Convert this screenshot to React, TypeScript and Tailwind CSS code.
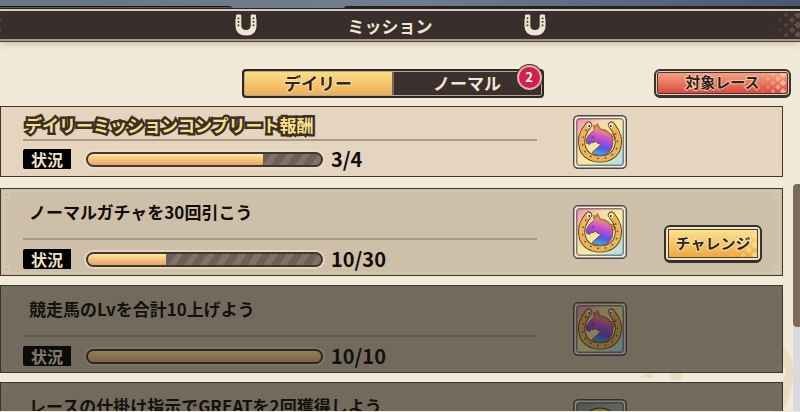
import { useState } from "react";

type Mission = {
  id: number;
  title: string;
  current: number;
  total: number;
  featured?: boolean;
  challenge?: boolean;
  cleared?: boolean;
  silver?: boolean;
};

const missions: Mission[] = [
  {
    id: 1,
    title: "デイリーミッションコンプリート報酬",
    current: 3,
    total: 4,
    featured: true,
  },
  {
    id: 2,
    title: "ノーマルガチャを30回引こう",
    current: 10,
    total: 30,
    challenge: true,
  },
  {
    id: 3,
    title: "競走馬のLvを合計10上げよう",
    current: 10,
    total: 10,
    cleared: true,
  },
  {
    id: 4,
    title: "レースの仕掛け指示でGREATを2回獲得しよう",
    current: 2,
    total: 2,
    cleared: true,
    silver: true,
  },
];

const Horseshoe = () => (
  <svg viewBox="0 0 22 22" className="w-[22px] h-[22px]" aria-hidden="true">
    <path
      d="M1 1.5Q1 .5 2 .5H5Q6.300 .5 6.300 1.500V12Q6.800 16 11 16T15.700 12V1.500Q15.700 .5 17 .5H20Q21 .5 21 1.500V4.500H21.500V12.500Q21 21.500 11 21.500T.5 12.500V4.500H1Z"
      fill="#efe5d0"
    />
    {[3.5, 7, 10.5].map((y) => (
      <g key={y} fill="#3b302c">
        <rect x="2.600" y={y} width="1.700" height="1.700" />
        <rect x="17.700" y={y} width="1.700" height="1.700" />
      </g>
    ))}
  </svg>
);

const Checker = ({ color, className }: { color: string; className: string }) => (
  <svg viewBox="0 0 28 24" className={className} aria-hidden="true">
    <g fill={color}>
      {[0, 1, 2, 3, 4].map((col) =>
        [0, 1, 2].map((row) => {
          const x = 2 + col * 6;
          const y = 2 + row * 10 + (col % 2) * 5;
          const r = 1.6 + col * 0.6;
          return (
            <path
              key={`${col}-${row}`}
              opacity={0.2 + col * 0.12}
              d={`M${x} ${y - r}L${x + r} ${y}L${x} ${y + r}L${x - r} ${y}Z`}
            />
          );
        })
      )}
    </g>
  </svg>
);

const RewardIcon = ({ id, silver }: { id: number; silver?: boolean }) => (
  <svg
    viewBox="0 0 54 54"
    className="w-[54px] h-[54px] shrink-0"
    role="img"
    aria-label="報酬"
  >
    <defs>
      <linearGradient id={`bg${id}`} x1="0" y1="0" x2="1" y2="1">
        <stop offset="0" stopColor={silver ? "#8f8f8f" : "#ee8cb4"} />
        <stop offset=".3" stopColor={silver ? "#a5a5a5" : "#f6d7a8"} />
        <stop offset=".6" stopColor={silver ? "#b5b5b5" : "#f3f0a4"} />
        <stop offset="1" stopColor={silver ? "#c5c5c5" : "#a9dcee"} />
      </linearGradient>
      <linearGradient id={`horse${id}`} x1=".65" y1="0" x2=".4" y2="1">
        <stop offset="0" stopColor="#f0ae5c" />
        <stop offset=".22" stopColor="#ea8a86" />
        <stop offset=".46" stopColor="#c44cd2" />
        <stop offset=".72" stopColor="#5a52e6" />
        <stop offset="1" stopColor="#2cc4ee" />
      </linearGradient>
    </defs>
    <rect x=".7" y=".7" width="52.600" height="52.600" rx="4.500" fill="#f1ece4" stroke="#4b4745" strokeWidth="1.400" />
    <rect x="3.800" y="3.800" width="46.400" height="46.400" rx="2" fill={`url(#bg${id})`} stroke="#514c50" strokeWidth="1" />
    {silver ? (
      <g fill="none" strokeLinecap="round">
        <path d="M15 36C2 4 52 4 39 36" stroke="#3b352c" strokeWidth="7" />
        <path d="M15 36C2 4 52 4 39 36" stroke="#e8d25c" strokeWidth="5" />
      </g>
    ) : (
      <g strokeLinejoin="round">
        <g fill="none" strokeLinecap="round">
          <path d="M15.500 10C3 25 8 44 27 44S51 25 38.500 10" stroke="#5d3c1c" strokeWidth="7.200" />
          <path d="M15.500 10C3 25 8 44 27 44S51 25 38.500 10" stroke="#e9b55c" strokeWidth="5.400" />
          <path
            d="M13 15C6 27 9 43 27 43.500S48 27 41 15"
            stroke="#7b4520"
            strokeWidth="1.500"
            strokeDasharray=".5 7"
          />
        </g>
        <circle cx="16" cy="10.500" r="2.300" fill="#fbf2da" />
        <circle cx="38" cy="10.500" r="2.300" fill="#fbf2da" />
        <circle cx="16.300" cy="11" r="1" fill="#2d2119" />
        <circle cx="37.700" cy="11" r="1" fill="#2d2119" />
        <path
          d="M21.500 15L20.500 10.500L23 11.500L24.500 8.500L27 14Q35 14.500 38.500 20.500Q41 27 39 32.500Q35.500 40 28.500 40.500Q22 40.500 19 37.500L28 29.500Q24.500 28.500 22.500 26.500Q20 28 18.500 27.500L16.500 29.500L13.500 28L13 25Q15 20 21.500 15Z"
          fill={`url(#horse${id})`}
          stroke="#8a5128"
          strokeWidth="1"
        />
        <path
          d="M21.500 15L21 10.500L23 12L24.500 9L27 14.500Q34 15.500 37.500 20.500"
          fill="none"
          stroke="#b78138"
          strokeWidth="1.500"
        />
        <path d="M38 20L41.500 19L39.500 22L43 23L40 25" fill="none" stroke="#8a5128" strokeWidth="1" />
        <path d="M18.500 22.500L21 21.800" stroke="#5a2a60" strokeWidth="1" />
      </g>
    )}
  </svg>
);

// small ornament in each corner of a card
const Corners = () => (
  <div
    aria-hidden="true"
    className="absolute inset-0.5 flex flex-col justify-between border border-[#dfd0b5]/50"
  >
    {["top", "bottom"].map((side) => (
      <div key={side} className="flex justify-between">
        <span className="size-1.5 border border-[#e6dac2]/40" />
        <span className="size-1.5 border border-[#e6dac2]/40" />
      </div>
    ))}
  </div>
);

const MissionCard = ({ mission }: { mission: Mission }) => {
  const { id, title, current, total, featured, challenge, cleared, silver } =
    mission;

  return (
    <li
      className={`relative flex shrink-0 items-center border border-[#40352e] pl-[22px] ${
        featured ? "mb-0.5 h-[71px] bg-[#e5d5bf]" : "h-[88px] bg-[#cebfa9]"
      }`}
    >
      <Corners />
      <div className="relative min-w-0 flex-1 self-stretch">
        <div
          className={`border-b-2 border-[#aa9b86] ${
            featured ? "h-[34px] pt-1.5" : "h-[51px] pt-[11px]"
          }`}
        >
          {featured ? (
            <h2 className="whitespace-nowrap pl-0.5 text-[17px] leading-6 font-bold text-[#f8df8d] [-webkit-text-stroke:5px_#3d3023] [paint-order:stroke_fill] [stroke-linejoin:round]">
              {title}
            </h2>
          ) : (
            <h2 className="whitespace-nowrap pl-1.5 text-[17px] leading-6 font-bold text-[#100d0a]">
              {title}
            </h2>
          )}
        </div>
        <div
          className={`flex items-center ${featured ? "pt-2" : "pt-[9px]"}`}
        >
          <span className="h-5 w-12 rounded-l-xs bg-black text-center text-[16px] leading-5 font-bold text-[#eee0c4]">
            状況
          </span>
          <div
            role="progressbar"
            aria-label={title}
            aria-valuenow={current}
            aria-valuemax={total}
            className="ml-[15px] h-[15px] w-[237px] overflow-hidden rounded-full border-2 border-[#41372f] bg-[repeating-linear-gradient(125deg,#6d6055_0px,#6d6055_7px,#807366_7px,#807366_13px)] ring-2 ring-[#eadfc9]/70"
          >
            <div
              className={`h-full bg-linear-to-b ${
                cleared
                  ? "from-[#fff0a0] to-[#f0a878]"
                  : "from-[#ffe79c] to-[#e9a068]"
              }`}
              style={{ width: `${(current / total) * 100}%` }}
            />
          </div>
          <span className="ml-2 text-[20px] leading-5 font-bold text-[#100d0a]">
            {current}/{total}
          </span>
        </div>
      </div>
      <div className="relative ml-9 flex w-[209px] items-center">
        <RewardIcon id={id} silver={silver} />
        {challenge && (
          <button
            type="button"
            className="mt-5 ml-[37px] -mb-1 h-[38px] w-[98px] rounded-md border-2 border-b-3 border-[#35302a] bg-[#eee4c8] p-0.5"
          >
            <span className="relative flex h-full items-center justify-center border border-[#4a3e2c] bg-linear-to-b from-[#fae28d] to-[#eea93d] text-[15px] font-bold text-[#2f241e]">
              <Checker
                color="#fbe3a0"
                className="absolute right-0 bottom-0 h-6 w-7"
              />
              <span className="relative [-webkit-text-stroke:2px_#f9e2a6] [paint-order:stroke_fill]">
                チャレンジ
              </span>
            </span>
          </button>
        )}
      </div>
      {cleared && <div className="absolute inset-0 bg-[#161512]/50" />}
    </li>
  );
};

const App = () => {
  const [tab, setTab] = useState("daily");

  return (
    <main className="relative flex h-screen flex-col overflow-hidden bg-[#f1ead8] font-['Noto_Sans_CJK_JP',sans-serif]">
      <svg
        viewBox="0 0 160 70"
        className="absolute right-0 bottom-0 h-[70px] w-40"
        aria-hidden="true"
      >
        <path
          d="M0 36L10 28L14 36ZM28 30H44L40 38H32ZM136 0Q154 8 153 34Q152 56 142 70H132L146 30Z"
          fill="#e9dcc2"
        />
      </svg>
      <div className="flex h-[9px] shrink-0 items-end justify-between bg-linear-to-r from-[#6b7581] via-[#707e91] to-[#4c566d]">
        <span className="h-[3px] w-[29%] rounded-tr border-t border-[#171513] bg-[#5b5850]" />
        <span className="h-[3px] w-[57%] rounded-tl bg-[#25221f]" />
      </div>
      <header className="flex h-8 shrink-0 items-center border-y-2 border-t-[#d9cbb6] border-b-[#a89688] bg-[#382e2b] shadow-[0_-1px_0_#292321,0_1px_0_#51443d,0_4px_5px_#b9aa9588]">
        <Checker color="#77604f" className="h-6 w-7 -scale-x-100 -ml-5" />
        <div className="flex flex-1 items-center justify-center gap-[91px]">
          <Horseshoe />
          <h1 className="pt-0.5 text-[17px] leading-6 font-bold text-[#f1e5cf]">
            ミッション
          </h1>
          <Horseshoe />
        </div>
        <Checker color="#77604f" className="h-6 w-7" />
      </header>

      <nav className="flex h-[65px] shrink-0 items-center pt-[19px] pr-[9px]">
        <div className="flex-1" />
        <div className="relative flex h-[29px] w-[302px] rounded-sm border-2 border-[#2e2825] bg-[#3b302d] p-px shadow-[inset_0_0_0_1px_#b4a694]">
          <button
            type="button"
            aria-pressed={tab === "daily"}
            onClick={() => setTab("daily")}
            className="flex-1 bg-linear-to-b from-[#fadd83] to-[#edae54] text-[17px] leading-5 font-bold text-[#2f2520] [-webkit-text-stroke:2px_#fbe0a0] [paint-order:stroke_fill]"
          >
            デイリー
          </button>
          <button
            type="button"
            aria-pressed={tab === "normal"}
            onClick={() => setTab("normal")}
            className="flex-1 border-l-2 border-[#746657] text-[17px] leading-5 font-bold text-[#f3e7d2]"
          >
            ノーマル
          </button>
          <span className="absolute -top-1.5 right-0 flex size-[25px] items-center justify-center rounded-full border-2 border-[#d8b6a4] bg-[#d21f4c] text-[13px] font-bold text-white ring-1 ring-[#4b292b]">
            2
          </span>
        </div>
        <div className="ml-1.5 flex flex-1 justify-end">
          <button
            type="button"
            className="h-[29px] w-[137px] rounded-md border-2 border-b-3 border-[#3b332e] bg-[#ddcfba] p-px"
          >
            <span className="relative flex h-full items-center justify-center rounded-xs border border-[#513630] bg-linear-to-b from-[#f0a280] to-[#db4840] text-[15px] font-bold text-[#30231f]">
              <Checker
                color="#ffd0b4"
                className="absolute right-0 h-5 w-7"
              />
              <span className="relative [-webkit-text-stroke:2px_#f7c2a5] [paint-order:stroke_fill]">
                対象レース
              </span>
            </span>
          </button>
        </div>
      </nav>

      <section className="relative mb-px flex min-h-0 flex-1">
        <ul className="flex min-w-0 flex-1 flex-col gap-[9px] overflow-hidden">
          {missions.map((mission) => (
            <MissionCard key={mission.id} mission={mission} />
          ))}
        </ul>
        <div className="ml-2.5 flex w-[7px] flex-col pt-[78px]">
          <div className="h-[143px] rounded-l-sm bg-[#7b695c]" />
          <div className="flex-1 bg-[#d9dadd]" />
        </div>
      </section>
    </main>
  );
};

export default App;
